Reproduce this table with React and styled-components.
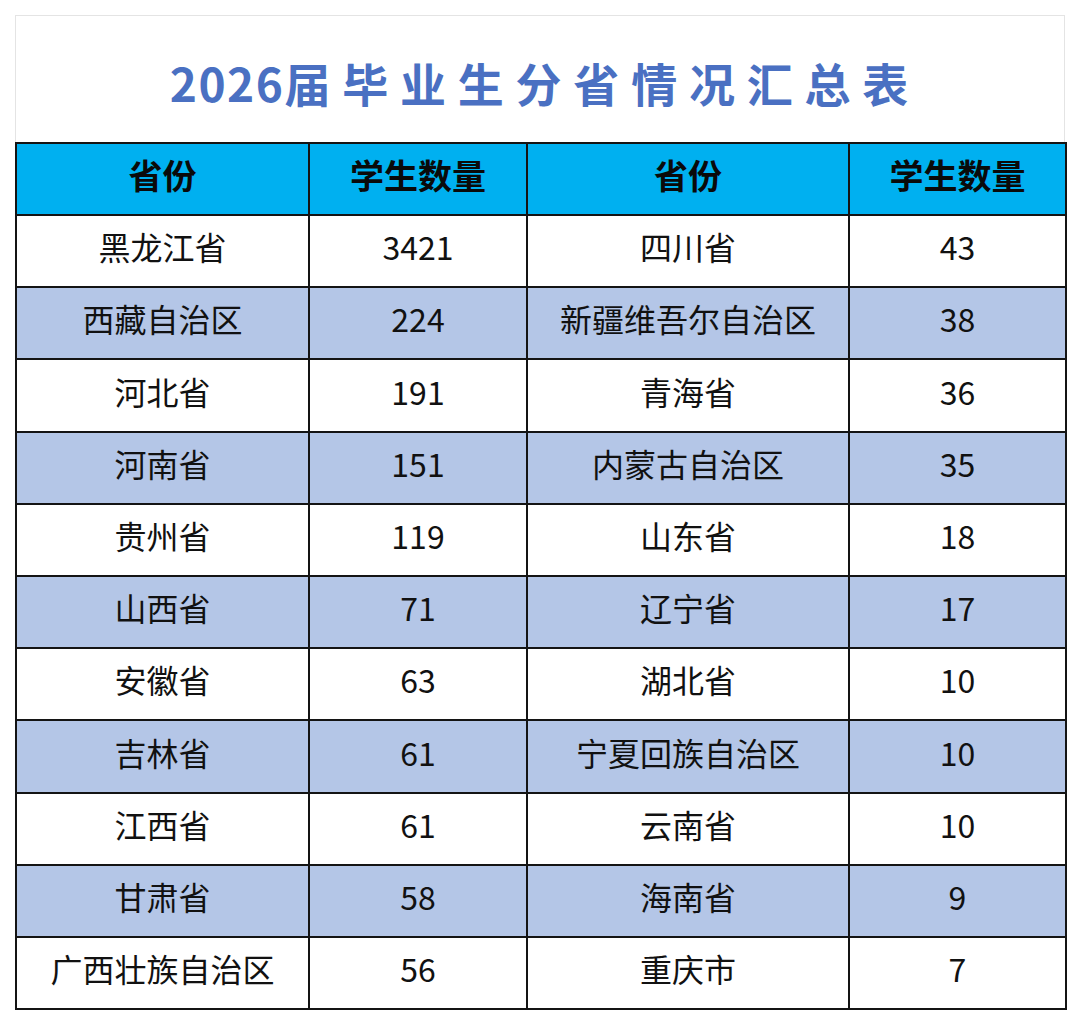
import React from "react";
import styled, { createGlobalStyle } from "styled-components";

const Global = createGlobalStyle`
  html, body { margin: 0; padding: 0; background: #ffffff; }
  body { font-family: "Noto Sans CJK SC", "Noto Sans", sans-serif; }
`;

const Page = styled.div`
  width: 1080px;
  height: 1025px;
  padding: 15px 0 0 15px;
  box-sizing: border-box;
`;

const Frame = styled.div`
  width: 1050px;
  display: flex;
  flex-direction: column;
`;

const TitleBox = styled.div`
  height: 127px;
  box-sizing: border-box;
  border: 1px solid #e4e4e4;
  border-bottom: none;
  display: flex;
  align-items: center;
  justify-content: center;
  padding: 6px 0 0 10px;
`;

const Title = styled.h1`
  margin: 0;
  font-family: "Noto Sans CJK SC", sans-serif;
  font-weight: 700;
  font-size: 46px;
  line-height: 1;
  color: #4a70c2;
  letter-spacing: 11.8px;
`;

const Year = styled.span`
  letter-spacing: 1.5px;
`;

const Table = styled.table`
  width: 1050px;
  border-collapse: collapse;
  table-layout: fixed;
`;

const HeadCell = styled.th`
  height: 63px;
  padding: 0 0 7px 0;
  background: #00b0f0;
  border: 2px solid #141414;
  font-family: "Noto Sans CJK SC", sans-serif;
  font-weight: 700;
  font-size: 34px;
  line-height: 1.3;
  color: #0a0a0a;
  text-align: center;
  vertical-align: middle;
`;

const Row = styled.tr`
  height: 72.2px;
  background: ${(p) => (p.$alt ? "#b4c6e7" : "#ffffff")};
`;

const Cell = styled.td`
  padding: 0 0 8px 0;
  border: 2px solid #141414;
  font-family: "Noto Sans CJK SC", sans-serif;
  font-weight: 400;
  font-size: 32px;
  line-height: 1.3;
  color: #111111;
  text-align: center;
  vertical-align: middle;
  white-space: nowrap;
`;

const rows = [
  ["黑龙江省", "3421", "四川省", "43"],
  ["西藏自治区", "224", "新疆维吾尔自治区", "38"],
  ["河北省", "191", "青海省", "36"],
  ["河南省", "151", "内蒙古自治区", "35"],
  ["贵州省", "119", "山东省", "18"],
  ["山西省", "71", "辽宁省", "17"],
  ["安徽省", "63", "湖北省", "10"],
  ["吉林省", "61", "宁夏回族自治区", "10"],
  ["江西省", "61", "云南省", "10"],
  ["甘肃省", "58", "海南省", "9"],
  ["广西壮族自治区", "56", "重庆市", "7"],
];

export default function App() {
  return (
    <Page>
      <Global />
      <Frame>
        <TitleBox>
          <Title>
            <Year>2026</Year>届毕业生分省情况汇总表
          </Title>
        </TitleBox>
        <Table>
          <colgroup>
            <col style={{ width: 293 }} />
            <col style={{ width: 218 }} />
            <col style={{ width: 322 }} />
            <col style={{ width: 217 }} />
          </colgroup>
          <thead>
            <tr>
              <HeadCell>省份</HeadCell>
              <HeadCell>学生数量</HeadCell>
              <HeadCell>省份</HeadCell>
              <HeadCell>学生数量</HeadCell>
            </tr>
          </thead>
          <tbody>
            {rows.map((r, i) => (
              <Row key={i} $alt={i % 2 === 1}>
                {r.map((c, j) => (
                  <Cell key={j}>{c}</Cell>
                ))}
              </Row>
            ))}
          </tbody>
        </Table>
      </Frame>
    </Page>
  );
}
